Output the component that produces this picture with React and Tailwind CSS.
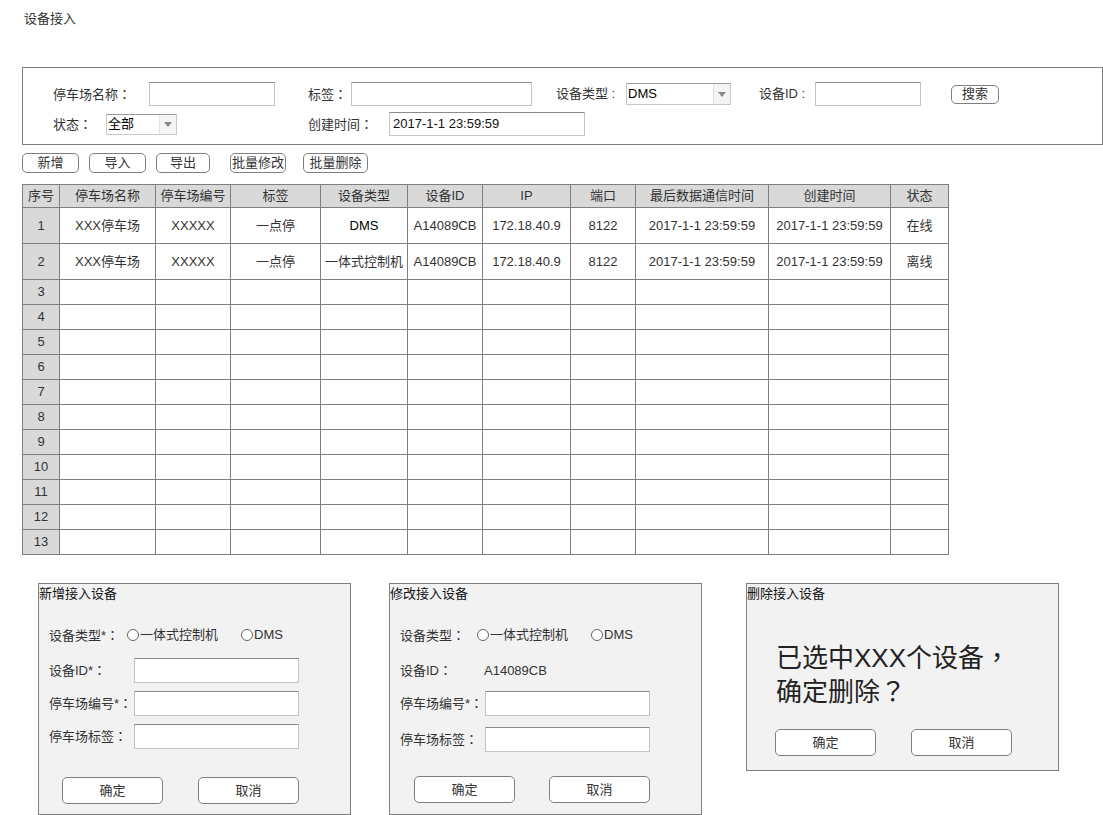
import React from "react";

const cols = [37, 96, 75, 90, 87, 75, 88, 65, 133, 122, 58];
const headers = ["序号", "停车场名称", "停车场编号", "标签", "设备类型", "设备ID", "IP", "端口", "最后数据通信时间", "创建时间", "状态"];
const rows = [
  ["XXX停车场", "XXXXX", "一点停", "DMS", "A14089CB", "172.18.40.9", "8122", "2017-1-1 23:59:59", "2017-1-1 23:59:59", "在线"],
  ["XXX停车场", "XXXXX", "一点停", "一体式控制机", "A14089CB", "172.18.40.9", "8122", "2017-1-1 23:59:59", "2017-1-1 23:59:59", "离线"],
];

// full-width punctuation centred in its box, like the reference font
const T = ({ s }) =>
  s.split(/([：，？])/).map((p, i) =>
    /[：，？]/.test(p) ? (
      <span key={i} className="font-['Noto_Sans_CJK_TC']">{p}</span>
    ) : (
      p
    )
  );

const Input = ({ w, h = "h-[24px]", value }) => (
  <div className={`${w} ${h} bg-white border border-[#c4c4c4] border-t-[#8a8a8a] flex items-center px-[3px] text-[13px] text-[#111]`}>
    {value}
  </div>
);

const Select = ({ w, h, value }) => (
  <div className={`${w} ${h} bg-white border border-[#c8c8c8] border-t-[#9a9a9a] flex items-stretch text-[13px] text-black`}>
    <span className="flex-1 flex items-center pl-[1px]">{value}</span>
    <span className="w-[17px] flex items-center justify-center bg-[#f4f4f4] border-l border-[#e2e2e2]">
      <svg width="8" height="5" viewBox="0 0 8 5"><path d="M0 0H8L4 5Z" fill="#8a8a8a" /></svg>
    </span>
  </div>
);

const Btn = ({ w, h, children, cls = "" }) => (
  <div className={`${w} ${h} ${cls} bg-white border border-[#7f7f7f] rounded-[5px] flex items-center justify-center text-[13px] text-[#333]`}>
    {children}
  </div>
);

const Radio = ({ label }) => (
  <span className="flex items-center">
    <span className="w-[12px] h-[12px] rounded-full border border-[#666] bg-white mr-[1px]" />
    {label}
  </span>
);

const App = () => {
  return (
    <div
      className="w-[1103px] h-[815px] bg-white text-[13px] text-[#333] overflow-hidden"
      style={{ fontFamily: '"Liberation Sans", "Noto Sans CJK SC", sans-serif' }}
    >
      {/* Title */}
      <div className="pl-[24px] pt-[10px] h-[67px] leading-[18px]">设备接入</div>

      {/* Filter box */}
      <div className="ml-[22px] w-[1081px] h-[78px] border border-[#7f7f7f] pt-[14px]">
        <div className="flex items-center h-[24px]">
          <span className="ml-[30px] w-[96px]"><T s="停车场名称：" /></span>
          <Input w="w-[126px]" />
          <span className="ml-[33px] w-[43px]"><T s="标签：" /></span>
          <Input w="w-[181px]" />
          <span className="ml-[24px] w-[70px]">设备类型 :</span>
          <Select w="w-[105px]" h="h-[22px]" value="DMS" />
          <span className="ml-[28px] w-[56px]">设备ID :</span>
          <Input w="w-[106px]" />
          <Btn w="w-[48px]" h="h-[19px]" cls="ml-[30px]">搜索</Btn>
        </div>
        <div className="flex items-center h-[24px] mt-[6px]">
          <span className="ml-[30px] w-[53px]"><T s="状态：" /></span>
          <Select w="w-[71px]" h="h-[21px]" value="全部" />
          <span className="ml-[131px] w-[81px]"><T s="创建时间：" /></span>
          <Input w="w-[196px]" value="2017-1-1 23:59:59" />
        </div>
      </div>

      {/* Action buttons */}
      <div className="flex ml-[22px] mt-[8px] h-[20px]">
        <Btn w="w-[57px]" h="h-[20px]">新增</Btn>
        <Btn w="w-[57px]" h="h-[20px]" cls="ml-[10px]">导入</Btn>
        <Btn w="w-[54px]" h="h-[20px]" cls="ml-[10px]">导出</Btn>
        <Btn w="w-[56px]" h="h-[20px]" cls="ml-[20px]">批量修改</Btn>
        <Btn w="w-[65px]" h="h-[20px]" cls="ml-[17px]">批量删除</Btn>
      </div>

      {/* Table */}
      <table className="ml-[22px] mt-[11px] border-collapse table-fixed w-[927px]">
        <colgroup>
          {cols.map((c, i) => (
            <col key={i} style={{ width: c }} />
          ))}
        </colgroup>
        <thead>
          <tr className="h-[23px] bg-[#d9d9d9]">
            {headers.map((h) => (
              <th key={h} className="border border-[#7f7f7f] font-normal p-0 text-center">{h}</th>
            ))}
          </tr>
        </thead>
        <tbody>
          {rows.map((r, i) => (
            <tr key={i} className="h-[36px]">
              <td className="border border-[#7f7f7f] bg-[#d9d9d9] text-center p-0">{i + 1}</td>
              {r.map((c, j) => (
                <td key={j} className={`border border-[#7f7f7f] text-center p-0 whitespace-nowrap ${c === "DMS" ? "text-black" : ""}`}>{c}</td>
              ))}
            </tr>
          ))}
          {Array.from({ length: 11 }, (_, i) => (
            <tr key={i} className="h-[25px]">
              <td className="border border-[#7f7f7f] bg-[#d9d9d9] text-center p-0">{i + 3}</td>
              {cols.slice(1).map((_, j) => (
                <td key={j} className="border border-[#7f7f7f] p-0" />
              ))}
            </tr>
          ))}
        </tbody>
      </table>

      {/* Dialogs */}
      <div className="flex items-start mt-[28px]">
        {/* Add */}
        <div className="ml-[38px] w-[313px] h-[232px] bg-[#f2f2f2] border border-[#7f7f7f] flex flex-col">
          <div className="h-[19px] leading-[19px] text-[#111]">新增接入设备</div>
          <div className="flex items-center h-[24px] mt-[20px] pl-[10px]">
            <span className="w-[78px]"><T s="设备类型*：" /></span>
            <Radio label="一体式控制机" />
            <span className="ml-[23px]"><Radio label="DMS" /></span>
          </div>
          <div className="flex items-center h-[25px] mt-[11px] pl-[10px]">
            <span className="w-[85px]"><T s="设备ID*：" /></span>
            <Input w="w-[165px]" h="h-[25px]" />
          </div>
          <div className="flex items-center h-[25px] mt-[8px] pl-[10px]">
            <span className="w-[85px]"><T s="停车场编号*：" /></span>
            <Input w="w-[165px]" h="h-[25px]" />
          </div>
          <div className="flex items-center h-[25px] mt-[8px] pl-[10px]">
            <span className="w-[85px]"><T s="停车场标签：" /></span>
            <Input w="w-[165px]" h="h-[25px]" />
          </div>
          <div className="flex mt-[28px] pl-[23px]">
            <Btn w="w-[101px]" h="h-[27px]">确定</Btn>
            <Btn w="w-[101px]" h="h-[27px]" cls="ml-[35px]">取消</Btn>
          </div>
        </div>

        {/* Edit */}
        <div className="ml-[38px] w-[313px] h-[232px] bg-[#f2f2f2] border border-[#7f7f7f] flex flex-col">
          <div className="h-[19px] leading-[19px] text-[#111]">修改接入设备</div>
          <div className="flex items-center h-[24px] mt-[20px] pl-[10px]">
            <span className="w-[77px]"><T s="设备类型：" /></span>
            <Radio label="一体式控制机" />
            <span className="ml-[23px]"><Radio label="DMS" /></span>
          </div>
          <div className="flex items-center h-[25px] mt-[11px] pl-[10px]">
            <span className="w-[84px]"><T s="设备ID：" /></span>
            <span>A14089CB</span>
          </div>
          <div className="flex items-center h-[25px] mt-[8px] pl-[10px]">
            <span className="w-[85px]"><T s="停车场编号*：" /></span>
            <Input w="w-[165px]" h="h-[25px]" />
          </div>
          <div className="flex items-center h-[25px] mt-[11px] pl-[10px]">
            <span className="w-[85px]"><T s="停车场标签：" /></span>
            <Input w="w-[165px]" h="h-[25px]" />
          </div>
          <div className="flex mt-[24px] pl-[24px]">
            <Btn w="w-[101px]" h="h-[27px]">确定</Btn>
            <Btn w="w-[101px]" h="h-[27px]" cls="ml-[34px]">取消</Btn>
          </div>
        </div>

        {/* Delete */}
        <div className="ml-[44px] w-[313px] h-[188px] bg-[#f2f2f2] border border-[#7f7f7f] flex flex-col">
          <div className="h-[19px] leading-[19px] text-[#111]">删除接入设备</div>
          <div className="mt-[37px] pl-[29px] text-[26px] leading-[32px] text-[#222]">
            <div><T s="已选中XXX个设备，" /></div>
            <div><T s="确定删除？" /></div>
          </div>
          <div className="flex mt-[21px] pl-[28px]">
            <Btn w="w-[101px]" h="h-[27px]">确定</Btn>
            <Btn w="w-[101px]" h="h-[27px]" cls="ml-[35px]">取消</Btn>
          </div>
        </div>
      </div>
    </div>
  );
};

export default App;
